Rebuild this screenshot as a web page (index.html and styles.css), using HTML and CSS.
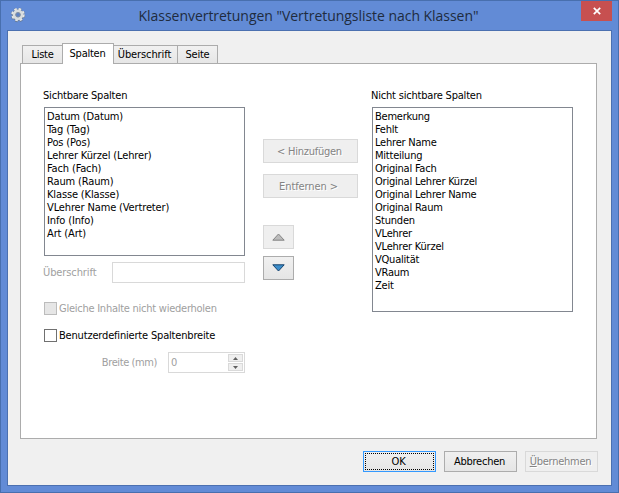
FILE: index.html
```html
<!DOCTYPE html>
<html lang="de">
<head>
<meta charset="utf-8">
<title>Klassenvertretungen</title>
<link rel="stylesheet" href="styles.css">
</head>
<body>
<div class="window">
  <header class="titlebar">
    <svg class="gear" width="16" height="16" viewBox="0 0 16 16">
      <circle cx="8" cy="8" r="5.7" fill="none" stroke="#667b99" stroke-width="3" stroke-dasharray="2.5 1.98"/>
      <circle cx="8" cy="8" r="4" fill="none" stroke="#70819a" stroke-width="4.2"/>
      <circle cx="8" cy="7.6" r="5.5" fill="none" stroke="#e4e7e9" stroke-width="2.4" stroke-dasharray="2.4 1.92"/>
      <circle cx="8" cy="7.7" r="3.9" fill="none" stroke="#d9dddf" stroke-width="2.8"/>
      <circle cx="8" cy="7.8" r="2.3" fill="#5d82c4" stroke="#8d969f" stroke-width=".8"/>
    </svg>
    <h1 class="title">Klassenvertretungen "Vertretungsliste nach Klassen"</h1>
    <button class="close" aria-label="Schließen"><svg width="8" height="8" viewBox="0 0 8 8"><path d="M.8.8l6.4 6.4M7.2.8L.8 7.2" stroke="#fff" stroke-width="1.7"/></svg></button>
  </header>
  <main class="client">
    <nav class="tabs">
      <span class="tab tab-list">Liste</span>
      <span class="tab tab-active">Spalten</span>
      <span class="tab tab-heading">Überschrift</span>
      <span class="tab tab-page">Seite</span>
    </nav>
    <section class="panel">
      <div class="visible">
        <div class="label">Sichtbare Spalten</div>
        <ul class="list list-visible">
          <li>Datum (Datum)</li><li>Tag (Tag)</li><li>Pos (Pos)</li><li>Lehrer Kürzel (Lehrer)</li><li>Fach (Fach)</li><li>Raum (Raum)</li><li>Klasse (Klasse)</li><li>VLehrer Name (Vertreter)</li><li>Info (Info)</li><li>Art (Art)</li>
        </ul>
        <div class="row row-heading disabled"><span class="text">Überschrift</span><span class="field"></span></div>
        <div class="check disabled"><span class="box"></span><span class="text">Gleiche Inhalte nicht wiederholen</span></div>
        <div class="check check-custom"><span class="box"></span><span class="text">Benutzerdefinierte Spaltenbreite</span></div>
        <div class="row row-width disabled"><span class="text">Breite (mm)</span>
          <span class="spin"><span class="value">0</span>
            <span class="steps">
              <span class="step"><svg width="5" height="3" viewBox="0 0 5 3"><path d="M0 3L2.5 0 5 3z" fill="#606060"/></svg></span>
              <span class="step"><svg width="5" height="3" viewBox="0 0 5 3"><path d="M0 0L2.5 3 5 0z" fill="#606060"/></svg></span>
            </span>
          </span>
        </div>
      </div>
      <div class="moves">
        <button class="btn btn-off">&lt; Hinzufügen</button>
        <button class="btn btn-off btn-remove">Entfernen &gt;</button>
        <button class="btn btn-off btn-arrow btn-up"><svg width="13" height="8" viewBox="0 0 13 8"><path d="M.8 7.2L6.5 1l5.7 6.2z" fill="#bcbcbc" stroke="#858585"/></svg></button>
        <button class="btn btn-arrow btn-down"><svg width="13" height="8" viewBox="0 0 13 8"><path d="M.8.8L6.5 7l5.7-6.2z" fill="#3c8dcb" stroke="#17436d"/></svg></button>
      </div>
      <div class="hidden-columns">
        <div class="label">Nicht sichtbare Spalten</div>
        <ul class="list list-hidden">
          <li>Bemerkung</li><li>Fehlt</li><li>Lehrer Name</li><li>Mitteilung</li><li>Original Fach</li><li>Original Lehrer Kürzel</li><li>Original Lehrer Name</li><li>Original Raum</li><li>Stunden</li><li>VLehrer</li><li>VLehrer Kürzel</li><li>VQualität</li><li>VRaum</li><li>Zeit</li>
        </ul>
      </div>
    </section>
    <footer class="actions">
      <button class="btn btn-ok"><span class="focus">OK</span></button>
      <button class="btn">Abbrechen</button>
      <button class="btn btn-off"><span><u>Ü</u>bernehmen</span></button>
    </footer>
  </main>
</div>
</body>
</html>
```
FILE: styles.css
```css
* { box-sizing: border-box; }
body { margin: 0; overflow: hidden; font: 11px/13px "DejaVu Sans Condensed", "DejaVu Sans", sans-serif; font-stretch: condensed; letter-spacing: -.25px; color: #000; }
.window { width: 619px; height: 493px; padding: 0 6px 6px; background: #628bd6; border: 1px solid #486fae; display: flex; flex-direction: column; }
.titlebar { height: 29px; flex: none; display: flex; align-items: flex-start; }
.gear { margin: 6px 0 0 3px; }
.title { flex: 1; margin: 5px 0 0 7px; padding-left: 3px; text-align: center; font: 14px/19px "Open Sans", "Noto Sans", sans-serif; letter-spacing: -.04px; color: #202b3e; white-space: nowrap; }
.close { width: 31px; height: 20px; padding: 0; border: 0; background: #c75050; display: flex; align-items: center; justify-content: center; }
.client { width: 605px; height: 456px; border: 1px solid #4b70b0; background: #f0f0f0; padding: 12px 13px 0 12px; }
.tabs { display: flex; align-items: flex-end; height: 21px; padding-left: 2px; margin-bottom: -1px; }
.tab { height: 19px; border: 1px solid #acacac; background: linear-gradient(#f1f1f1, #e6e6e6); display: flex; justify-content: center; align-items: center; white-space: nowrap; }
.tab-list { width: 41px; }
.tab-active { width: 52px; height: 21px; margin-left: -1px; background: #fff; border-bottom: 0; padding: 0 1px 1px 0; z-index: 1; }
.tab-heading { width: 65px; margin-left: -1px; padding-right: 2px; letter-spacing: -.1px; }
.tab-page { width: 41px; margin-left: -1px; }
.panel { width: 577px; height: 376px; border: 1px solid #acacac; background: #fff; display: flex; padding: 25px 23px 0; }
.visible { width: 201px; }
.label { height: 18px; margin-left: -1px; white-space: nowrap; letter-spacing: -.2px; }
.list { list-style: none; margin: 0; padding: 2px; width: 201px; border: 1px solid #828790; white-space: nowrap; }
.list-visible { height: 149px; letter-spacing: -.14px; }
.list-hidden { height: 205px; letter-spacing: -.22px; }
.row { display: flex; align-items: center; justify-content: space-between; height: 21px; margin-top: 6px; }
.row .text { margin-left: -1px; }
.row-heading { letter-spacing: -.1px; }
.disabled { color: #a0a0a0; }
.field { width: 133px; height: 21px; border: 1px solid #d9d9d9; }
.check { display: flex; align-items: center; height: 13px; margin-top: 19px; white-space: nowrap; }
.check .text { margin-left: 2px; }
.box { width: 13px; height: 13px; flex: none; border: 1px solid #707070; background: #fff; }
.disabled .box { border-color: #bcbcbc; background: #e6e6e6; }
.check-custom { margin-top: 14px; letter-spacing: -.18px; }
.row-width { margin-top: 10px; justify-content: flex-end; gap: 11px; letter-spacing: -.4px; }
.spin { width: 77px; height: 21px; border: 1px solid #d9d9d9; padding: 1px 1px 1px 2px; display: flex; justify-content: space-between; }
.value { line-height: 17px; }
.steps { display: flex; flex-direction: column; gap: 1px; }
.step { width: 15px; height: 8px; border: 1px solid #d9d9d9; background: #efefef; display: flex; align-items: center; justify-content: center; }
.moves { width: 95px; margin: 50px 14px 0 18px; }
.btn { font: inherit; letter-spacing: inherit; color: inherit; padding: 0; border: 1px solid #acacac; background: linear-gradient(#f0f0f0, #e5e5e5); display: flex; justify-content: center; align-items: center; white-space: nowrap; }
.btn-off { color: #838383; background: #efefef; border-color: #d9d9d9; text-shadow: 1px 1px #fff; }
.moves .btn { width: 95px; height: 24px; padding-right: 2px; }
.moves .btn-remove { margin-top: 11px; padding-right: 4px; letter-spacing: -.1px; }
.moves .btn-arrow { width: 31px; padding: 0 1px 0 0; }
.moves .btn-up { margin-top: 27px; }
.moves .btn-down { margin-top: 7px; }
.actions { display: flex; justify-content: flex-end; gap: 8px; margin: 12px 0 0; }
.actions .btn { width: 73px; height: 21px; padding-right: 2px; }
.actions .btn-ok { border-color: #3399ff; padding: 0; }
.focus { width: 71px; height: 17px; border: 1px dotted #000; line-height: 15px; width: 69px; padding-right: 2px; }
```
